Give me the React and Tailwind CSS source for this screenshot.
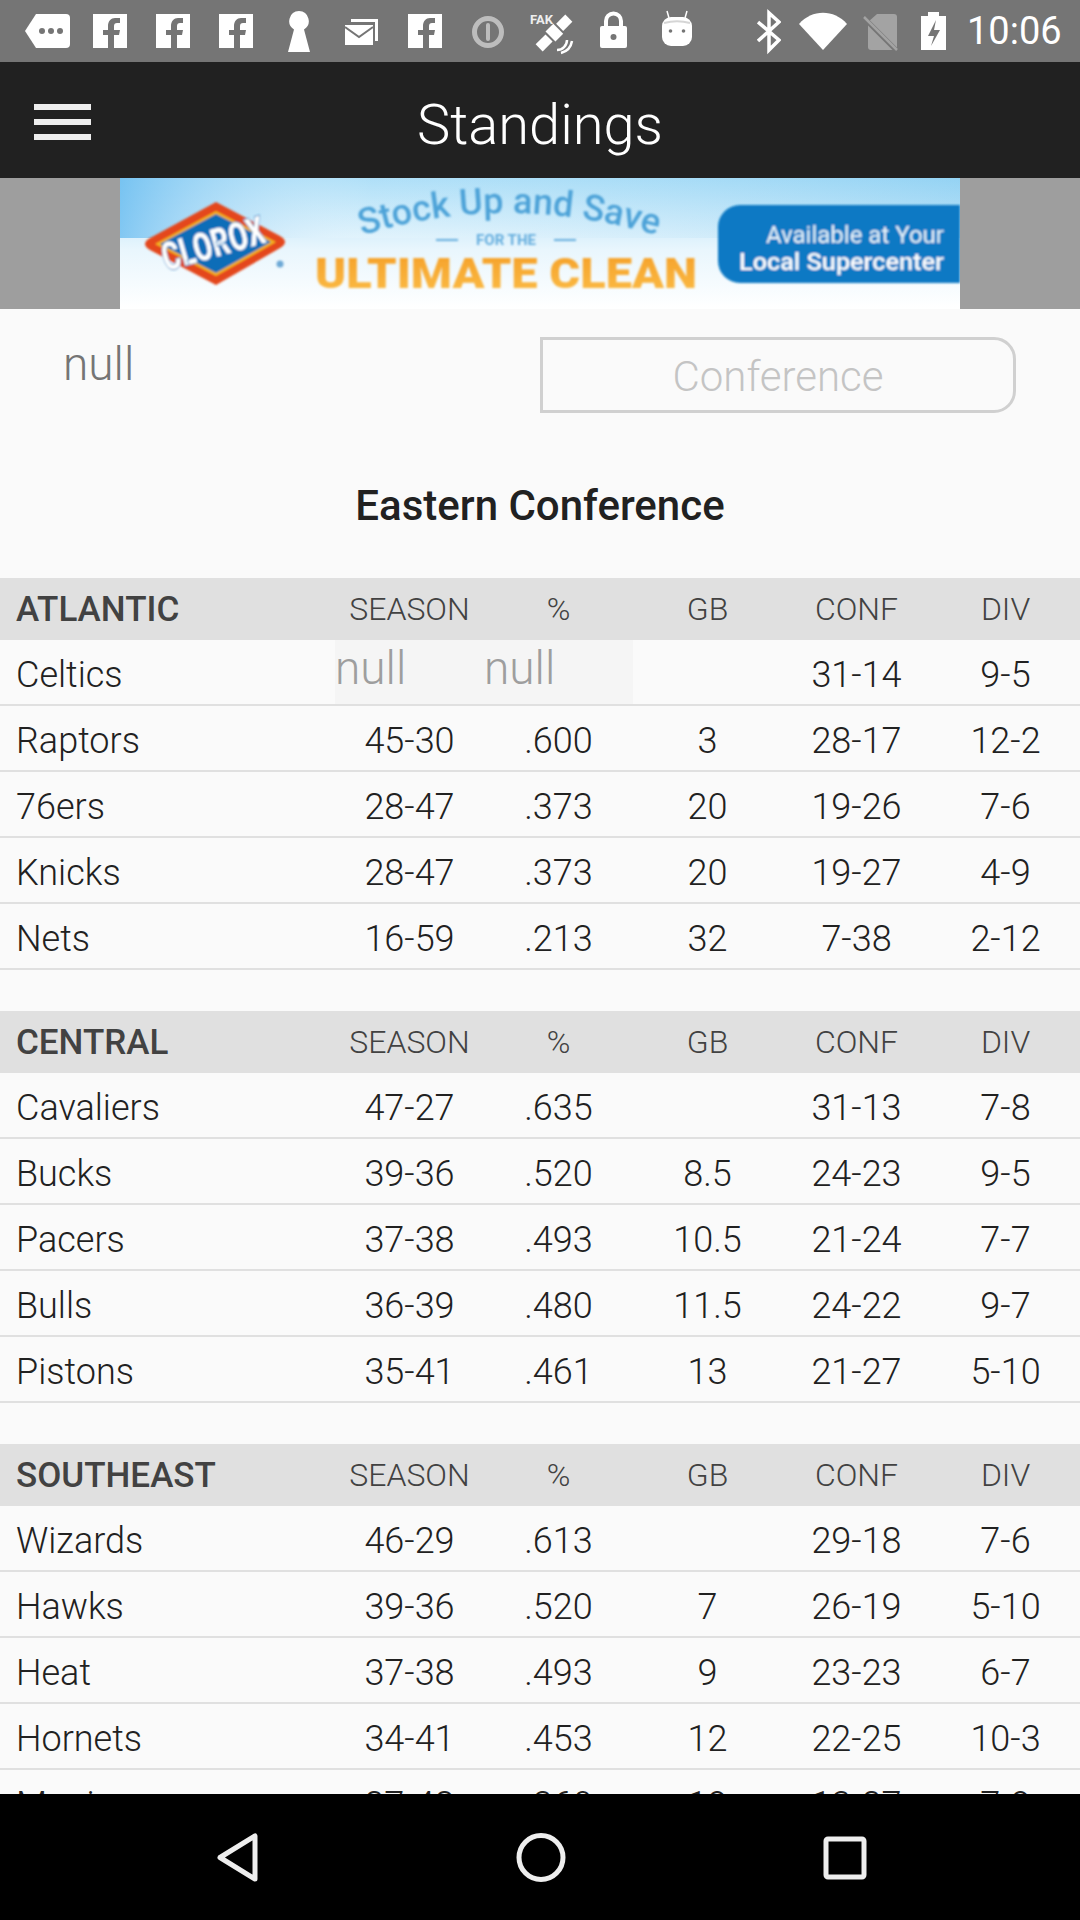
const sections = [
  {
    name: "ATLANTIC",
    teams: [
      ["Celtics", null, null, "", "31-14", "9-5"],
      ["Raptors", "45-30", ".600", "3", "28-17", "12-2"],
      ["76ers", "28-47", ".373", "20", "19-26", "7-6"],
      ["Knicks", "28-47", ".373", "20", "19-27", "4-9"],
      ["Nets", "16-59", ".213", "32", "7-38", "2-12"],
    ],
  },
  {
    name: "CENTRAL",
    teams: [
      ["Cavaliers", "47-27", ".635", "", "31-13", "7-8"],
      ["Bucks", "39-36", ".520", "8.5", "24-23", "9-5"],
      ["Pacers", "37-38", ".493", "10.5", "21-24", "7-7"],
      ["Bulls", "36-39", ".480", "11.5", "24-22", "9-7"],
      ["Pistons", "35-41", ".461", "13", "21-27", "5-10"],
    ],
  },
  {
    name: "SOUTHEAST",
    teams: [
      ["Wizards", "46-29", ".613", "", "29-18", "7-6"],
      ["Hawks", "39-36", ".520", "7", "26-19", "5-10"],
      ["Heat", "37-38", ".493", "9", "23-23", "6-7"],
      ["Hornets", "34-41", ".453", "12", "22-25", "10-3"],
      ["Magic", "27-48", ".360", "19", "13-27", "7-9"],
    ],
  },
];

function FbIcon({ className }) {
  return (
    <svg width="34" height="62" viewBox="0 0 34 62" className={className}>
      <rect x="0" y="14" width="34" height="34" fill="#fff" />
      <path
        d="M15 48V35h-5v-5h5v-4c0-5 3-8 7-8h5v5h-3c-2 0-3 1-3 3v4h6l-1 5h-5v13z"
        fill="#757575"
      />
    </svg>
  );
}

function StatusBar() {
  return (
    <div className="h-[62px] bg-[#757575] flex items-center pl-[25px] shrink-0">
      <svg width="45" height="62" viewBox="0 0 45 62">
        <path d="M11 14h30a4 4 0 0 1 4 4v26a4 4 0 0 1-4 4H11L0 31z" fill="#fff" />
        <circle cx="17" cy="31" r="3" fill="#757575" />
        <circle cx="26" cy="31" r="3" fill="#757575" />
        <circle cx="35" cy="31" r="3" fill="#757575" />
      </svg>
      <FbIcon className="ml-[23px]" />
      <FbIcon className="ml-[29px]" />
      <FbIcon className="ml-[29px]" />
      <svg width="22" height="62" viewBox="0 0 22 62" className="ml-[35px]">
        <path d="M11 11a10 10 0 0 1 5 18.500L22 52H0l6-22.500A10 10 0 0 1 11 11z" fill="#fff" />
      </svg>
      <svg width="34" height="62" viewBox="0 0 34 62" className="ml-[35px]">
        <path d="M6 22v-3h27v22h-3V22z" fill="#fff" />
        <path d="M0 25h28v20H0z" fill="#fff" />
        <path d="M0 27l14 10 14-10" fill="none" stroke="#757575" strokeWidth="2" />
      </svg>
      <FbIcon className="ml-[29px]" />
      <svg width="32" height="62" viewBox="0 0 32 62" className="ml-[30px]">
        <circle cx="16" cy="32" r="13.500" fill="none" stroke="#bdbdbd" strokeWidth="5" />
        <rect x="14" y="23" width="4" height="18" rx="2" fill="#bdbdbd" />
      </svg>
      <svg width="44" height="62" viewBox="0 0 44 62" className="ml-[26px]">
        <text x="0" y="24" fontSize="13" fontWeight="700" fontFamily="Roboto, sans-serif" fill="#eeeeee">
          FAK
        </text>
        <g fill="#fff" transform="rotate(-45 24 33)">
          <rect x="3" y="28" width="14" height="10" />
          <rect x="19" y="26" width="11" height="14" />
          <rect x="32" y="28" width="13" height="10" />
        </g>
        <path d="M27 50a10 10 0 0 0 10-10M31 53a15 15 0 0 0 11-12" fill="none" stroke="#fff" strokeWidth="2.500" />
      </svg>
      <svg width="27" height="62" viewBox="0 0 27 62" className="ml-[26px]">
        <path d="M6 27v-6a7.500 7.500 0 0 1 15 0v6" fill="none" stroke="#fff" strokeWidth="4" />
        <rect x="0" y="26" width="27" height="22" rx="2" fill="#fff" />
        <circle cx="13.500" cy="37" r="3" fill="#757575" />
      </svg>
      <svg width="32" height="62" viewBox="0 0 32 62" className="ml-[34px]">
        <path d="M8 18l-2-7M24 18l2-7" stroke="#fff" strokeWidth="1.500" />
        <rect x="1" y="17" width="30" height="29" rx="9" fill="#fff" />
        <path d="M3 23a22 8 0 0 1 26 0" fill="none" stroke="#d5d5d5" strokeWidth="2" />
        <circle cx="9.500" cy="31" r="1.800" fill="#757575" />
        <circle cx="22.500" cy="31" r="1.800" fill="#757575" />
      </svg>
      <svg width="24" height="62" viewBox="0 0 24 62" className="ml-[64px]">
        <path d="M1 22l21 18-10 10V13l10 9L1 41" fill="none" stroke="#fff" strokeWidth="3.500" />
      </svg>
      <svg width="48" height="62" viewBox="0 0 48 62" className="ml-[18px]">
        <path d="M0 24C13 9 35 9 48 24L24 50z" fill="#fff" />
      </svg>
      <svg width="36" height="62" viewBox="0 0 36 62" className="ml-[16px]">
        <path d="M5 22l9-8h17a3 3 0 0 1 3 3v30a3 3 0 0 1-3 3H8a3 3 0 0 1-3-3z" fill="#a3a3a3" />
        <path d="M0 17l33 33" stroke="#757575" strokeWidth="5" />
        <path d="M1 17l33 33" stroke="#a3a3a3" strokeWidth="2.500" />
      </svg>
      <svg width="25" height="62" viewBox="0 0 25 62" className="ml-[22px]">
        <path d="M7 12h11v4h7v34H0V16h7z" fill="#fff" />
        <path d="M15 20l-8 16h6l-3 10 9-16h-6z" fill="#757575" />
      </svg>
      <span className="ml-[21px] text-[38px] leading-none text-white font-normal">10:06</span>
    </div>
  );
}

function AppBar() {
  return (
    <div className="h-[116px] bg-[#212121] grid grid-cols-[1fr_auto_1fr] items-center shrink-0">
      <div className="pl-[34px] flex flex-col gap-[9px] mt-[3px]">
        <div className="w-[57px] h-[6px] bg-[#eeeeee]" />
        <div className="w-[57px] h-[6px] bg-[#eeeeee]" />
        <div className="w-[57px] h-[6px] bg-[#eeeeee]" />
      </div>
      <h1 className="text-[56px] font-light leading-none text-white mt-[9px]">Standings</h1>
      <div />
    </div>
  );
}

function AdBanner() {
  return (
    <div className="h-[131px] bg-[#9e9e9e] flex justify-center shrink-0">
      <svg width="840" height="131" viewBox="0 0 840 131">
        <defs>
          <linearGradient id="sky" x1="0" y1="0" x2="0" y2="1">
            <stop offset="0" stopColor="#a6dcf7" />
            <stop offset="0.55" stopColor="#e9f6fd" />
            <stop offset="1" stopColor="#ffffff" />
          </linearGradient>
          <linearGradient id="glow" x1="0" y1="0" x2="1" y2="0">
            <stop offset="0" stopColor="#6bbdf0" stopOpacity="0.8" />
            <stop offset="0.3" stopColor="#ffffff" stopOpacity="0.1" />
            <stop offset="1" stopColor="#5fb8ea" stopOpacity="0.25" />
          </linearGradient>
          <linearGradient id="gold" x1="0" y1="0" x2="0" y2="1">
            <stop offset="0" stopColor="#f59e26" />
            <stop offset="1" stopColor="#fbbd48" />
          </linearGradient>
          <path id="arc" d="M240 58 Q 384 12 540 58" />
          <filter id="soft">
            <feGaussianBlur stdDeviation="0.800" />
          </filter>
        </defs>
        <rect width="840" height="131" fill="url(#sky)" />
        <rect width="840" height="60" fill="url(#glow)" />
        <g filter="url(#soft)">
          <path d="M96 24 L160 58 Q170 64 160 70 L96 107 L30 72 Q20 66 30 60 Z" fill="#e4461f" />
          <path d="M96 33 L156 64 L96 98 L35 66 Z" fill="#f6b21b" />
          <path d="M96 36 L151 64 L96 95 L40 66 Z" fill="#0f6db8" />
          <text
            x="0"
            y="0"
            textAnchor="middle"
            fontSize="32"
            fontWeight="900"
            fontFamily="Roboto, sans-serif"
            fill="#fff"
            stroke="#0f6db8"
            strokeWidth="0.500"
            transform="translate(97 79) rotate(-16) scale(0.86 1.25)"
          >
            CLOROX
          </text>
          <circle cx="160" cy="86" r="3.500" fill="#6da9d6" />
          <text fontSize="36" fontWeight="500" fontFamily="Roboto, sans-serif" fill="#4ea3d8">
            <textPath href="#arc" startOffset="2">
              Stock Up and Save
            </textPath>
          </text>
          <path d="M316 62h22M434 62h22" stroke="#66aede" strokeWidth="2" />
          <text x="386" y="67" textAnchor="middle" fontSize="15" fontWeight="700" fontFamily="Roboto, sans-serif" fill="#66aede">
            FOR THE
          </text>
          <text
            x="386"
            y="110"
            textAnchor="middle"
            fontSize="43"
            fontWeight="900"
            textLength="382"
            lengthAdjust="spacingAndGlyphs"
            fontFamily="Roboto, sans-serif"
            fill="url(#gold)"
          >
            ULTIMATE CLEAN
          </text>
          <path d="M840 27H620a22 22 0 0 0-22 22v34a22 22 0 0 0 22 22h220z" fill="#0a79c4" />
          <text x="824" y="65" textAnchor="end" fontSize="24" fontWeight="400" textLength="178" lengthAdjust="spacingAndGlyphs" fontFamily="Roboto, sans-serif" fill="#e8f4fb">
            Available at Your
          </text>
          <text x="824" y="92" textAnchor="end" fontSize="24" fontWeight="500" textLength="205" lengthAdjust="spacingAndGlyphs" fontFamily="Roboto, sans-serif" fill="#fff">
            Local Supercenter
          </text>
        </g>
      </svg>
    </div>
  );
}

function Section({ name, teams }) {
  return (
    <div className="mb-[41px]">
      <div className="h-[62px] bg-[#e0e0e0] flex items-center text-[32px] font-light text-[#424242]">
        <div className="w-[335px] pl-4 pt-[3px] text-[35px] font-medium text-[#424242]">{name}</div>
        <div className="w-[149px] text-center">SEASON</div>
        <div className="w-[149px] text-center">%</div>
        <div className="w-[149px] text-center">GB</div>
        <div className="w-[149px] text-center">CONF</div>
        <div className="w-[149px] text-center">DIV</div>
      </div>
      {teams.map((t) => (
        <div
          key={t[0]}
          className="h-[66px] border-b-2 border-[#e0e0e0] flex items-center text-[36px] font-light leading-none text-[#212121]"
        >
          <div className="w-[335px] pl-4 pt-[5px]">{t[0]}</div>
          {t[1] === null ? (
            <div className="w-[298px] h-full bg-[#f5f5f5] flex items-start text-[#9e9e9e] text-[46px] leading-[56px]">
              <div className="w-[149px]">null</div>
              <div className="w-[149px]">null</div>
            </div>
          ) : (
            <>
              <div className="w-[149px] text-center pt-[5px]">{t[1]}</div>
              <div className="w-[149px] text-center pt-[5px]">{t[2]}</div>
            </>
          )}
          <div className="w-[149px] text-center pt-[5px]">{t[3]}</div>
          <div className="w-[149px] text-center pt-[5px]">{t[4]}</div>
          <div className="w-[149px] text-center pt-[5px]">{t[5]}</div>
        </div>
      ))}
    </div>
  );
}

function NavBar() {
  return (
    <div className="h-[126px] bg-black flex items-start shrink-0">
      <svg width="1080" height="126" viewBox="0 0 1080 126">
        <path d="M255 42v43l-35-21.500z" fill="none" stroke="#eeeeee" strokeWidth="5" strokeLinejoin="round" />
        <circle cx="541" cy="63.500" r="22" fill="none" stroke="#eeeeee" strokeWidth="5" />
        <rect x="826" y="45" width="38" height="38" rx="2" fill="none" stroke="#eeeeee" strokeWidth="5" />
      </svg>
    </div>
  );
}

export default function App() {
  return (
    <div className="w-[1080px] h-[1920px] flex flex-col overflow-hidden font-['Roboto',sans-serif]">
      <StatusBar />
      <AppBar />
      <AdBanner />
      <div className="flex-1 min-h-0 overflow-hidden bg-[#fafafa]">
        <div className="flex items-start pt-[28px] pl-[63px]">
          <div className="w-[477px] text-[46px] font-light leading-[54px] text-[#757575]">null</div>
          <div className="w-[476px] h-[76px] pt-[2px] border-[3px] border-[#d0d0d0] rounded-r-[22px] flex items-center justify-center text-[42px] font-light text-[#c4c4c4]">
            Conference
          </div>
        </div>
        <div className="h-[165px] pt-[20px] flex items-center justify-center text-[42px] font-medium text-[#212121]">
          Eastern Conference
        </div>
        {sections.map((s) => (
          <Section key={s.name} name={s.name} teams={s.teams} />
        ))}
      </div>
      <NavBar />
    </div>
  );
}
